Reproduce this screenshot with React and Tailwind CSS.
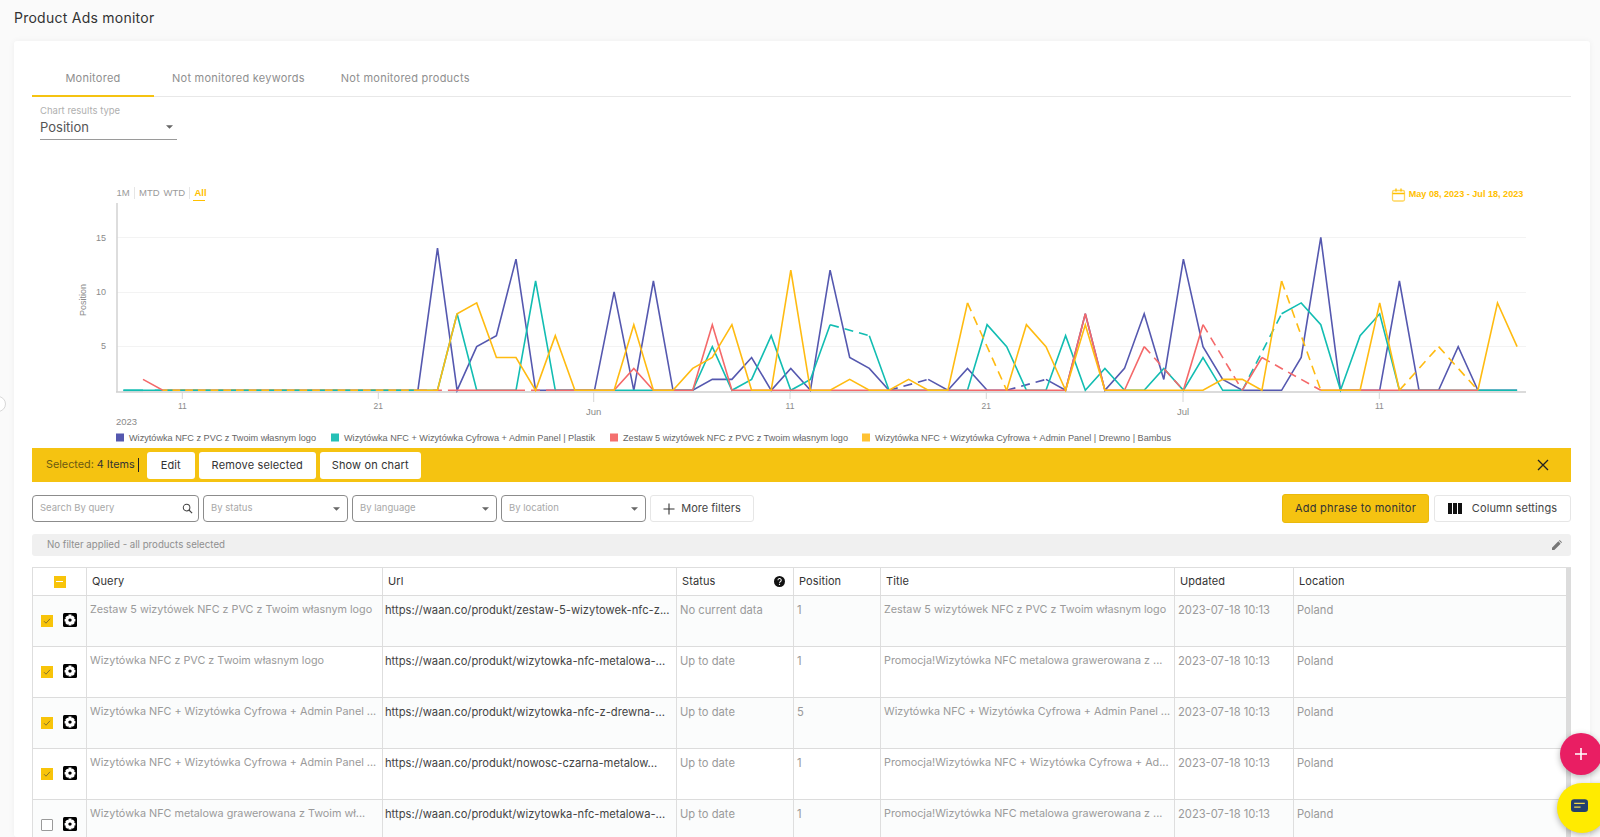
const FONT = "font-['Inter','Liberation_Sans',sans-serif]";

const X = (i) => 123.4 + 19.63 * i;
const Y = (v) => 390.3 - (v - 1) * 10.93;
const _ = null;

const blue = [_,_,_,_,_,_,_,_,_,_,_,_,_,_,_,1,14,1,5,6,13,1,1,1,1,10,1,11,1,1,2,2,4,1,3,1,12,4,3,1,_,2,1,3,1,1,_,2,1,8,1,3,8,2,13,5,2,1,1,1,4,15,1,1,1,11,1,1,5,1,1,1];
const teal = [1,1,1,1,1,1,1,1,1,1,1,1,1,1,1,1,1,8,1,1,1,11,1,1,1,1,1,1,1,1,5,1,2,6,1,2,7,_,6,1,1,1,1,1,7,5,1,1,6,1,3,1,1,3,1,4,1,1,_,8,9,7,1,6,8,1,1,1,1,1,1,1];
const red = [_,2,1,1,1,1,1,1,1,1,1,1,1,1,1,1,_,1,1,1,1,_,1,1,1,1,3,1,1,1,7,1,1,1,1,1,1,1,1,1,1,1,1,1,1,1,1,1,1,8,1,1,5,_,1,7,_,1,4,_,_,1,1,1,1,1,1,1,1,1,_,_];
const yellow = [_,_,1,1,1,1,1,1,1,1,1,1,1,1,1,1,1,8,9,4,4,1,6,1,1,1,7,1,1,3,4,7,1,1,12,1,1,2,1,1,2,1,1,9,_,1,7,5,1,7,1,1,1,1,1,1,2,2,1,11,_,1,1,1,9,1,_,5,_,1,9,5];

function buildPaths(vals) {
  let solid = "";
  let dashed = "";
  let last = null;
  vals.forEach((v, i) => {
    if (v === null) return;
    const pt = `${X(i).toFixed(1)} ${Y(v).toFixed(1)}`;
    if (last === null) solid += `M${pt}`;
    else if (last === i - 1) solid += `L${pt}`;
    else {
      dashed += `M${X(last).toFixed(1)} ${Y(vals[last]).toFixed(1)}L${pt}`;
      solid += `M${pt}`;
    }
    last = i;
  });
  return { solid, dashed };
}

function Series({ vals, color }) {
  const { solid, dashed } = buildPaths(vals);
  return (
    <g fill="none" stroke={color} strokeWidth="1.6" strokeLinejoin="miter">
      <path d={solid} />
      <path d={dashed} strokeDasharray="9 6" />
    </g>
  );
}

function Chart() {
  const tx = "#8a8a8a";
  const ticks = [[182.3, "11", 0], [378.3, "21", 0], [593.7, "Jun", 1], [790, "11", 0], [986.3, "21", 0], [1183, "Jul", 1], [1379.3, "11", 0]];
  const legend = [
    [116, "#5558af", "Wizytówka NFC z PVC z Twoim własnym logo", 187],
    [331, "#26c0b6", "Wizytówka NFC + Wizytówka Cyfrowa + Admin Panel | Plastik", 251],
    [610, "#f4706f", "Zestaw 5 wizytówek NFC z PVC z Twoim własnym logo", 225],
    [862, "#ffc233", "Wizytówka NFC + Wizytówka Cyfrowa + Admin Panel | Drewno | Bambus", 296],
  ];
  return (
    <svg viewBox="32 183 1539 262" className="block w-[1539px] h-[262px]" fontFamily="'Liberation Sans', Arial, sans-serif">
      <g fontSize="9.5" fill="#9a9a9a">
        <text x="116.5" y="196">1M</text>
        <line x1="134.5" y1="187" x2="134.5" y2="199" stroke="#e6e6e6" />
        <text x="139" y="196">MTD</text>
        <text x="163.5" y="196">WTD</text>
        <line x1="189.5" y1="187" x2="189.5" y2="199" stroke="#e6e6e6" />
        <text x="194.5" y="196" fill="#ffc000" fontWeight="700">All</text>
        <line x1="193" y1="200.5" x2="205" y2="200.5" stroke="#ffc000" />
      </g>
      <g fill="none" stroke="#ffd65c" strokeWidth="1.3">
        <rect x="1392.5" y="190.5" width="12" height="10.5" rx="1.5" />
        <path d="M1392.5 193.5h12M1396 188.5v3M1401 188.5v3" stroke="#ffc000" />
      </g>
      <text x="1408.7" y="197" fontSize="9.5" fontWeight="700" fill="#ffc000" textLength="114.6" lengthAdjust="spacingAndGlyphs">May 08, 2023 - Jul 18, 2023</text>

      <g stroke="#f3f3f3">
        <line x1="117" y1="237.5" x2="1526" y2="237.5" />
        <line x1="117" y1="292.5" x2="1526" y2="292.5" />
        <line x1="117" y1="346.5" x2="1526" y2="346.5" />
      </g>
      <line x1="117" y1="203" x2="117" y2="392" stroke="#cfcfcf" strokeWidth="1.4" />
      <line x1="116" y1="392" x2="1526" y2="392" stroke="#cfcfcf" strokeWidth="1.4" />
      <g fontSize="9" fill={tx} textAnchor="end">
        <text x="106" y="241">15</text>
        <text x="106" y="295">10</text>
        <text x="106" y="349">5</text>
      </g>
      <text transform="translate(86 300) rotate(-90)" fontSize="9" fill={tx} textAnchor="middle">Position</text>

      {ticks.map(([x, label, major], i) => (
        <g key={i}>
          <line x1={x} y1="392" x2={x} y2={major ? 402 : 399} stroke="#d6d6d6" />
          <text x={x} y={major ? 415 : 409} fontSize={major ? 9.5 : 8.5} fill={tx} textAnchor="middle">{label}</text>
        </g>
      ))}
      <text x="116" y="425" fontSize="9.5" fill={tx}>2023</text>

      <Series vals={blue} color="#5558af" />
      <Series vals={teal} color="#12bdb2" />
      <Series vals={red} color="#f4696a" />
      <Series vals={yellow} color="#ffbb11" />
      <path d={`M${X(1.6)} ${Y(1)}H${X(15)}`} fill="none" stroke="#12bdb2" strokeWidth="1.6" strokeDasharray="5 7.7" />
      <path d={`M${X(0)} ${Y(1)}H${X(1)}`} fill="none" stroke="#12bdb2" strokeWidth="1.6" />

      {legend.map(([x, c, t, w]) => (
        <g key={t}>
          <rect x={x} y="433.5" width="8" height="8" fill={c} />
          <text x={x + 13} y="441" fontSize="9.6" fill="#666" textLength={w} lengthAdjust="spacingAndGlyphs">{t}</text>
        </g>
      ))}
    </svg>
  );
}

function Caret({ className = "" }) {
  return (
    <svg viewBox="0 0 10 5" className={`w-[7px] h-[4px] ${className}`}>
      <path d="M0 0h10L5 5z" fill="#666" />
    </svg>
  );
}

function Select({ label, w }) {
  return (
    <div className={`${w} h-[27px] flex items-center justify-between pl-[7px] pr-[7px] border border-[#8c8c8c] rounded-[4px] text-[9.5px] text-[#a8a8a8]`}>
      <span>{label}</span>
      <Caret />
    </div>
  );
}

function Btn({ children, w }) {
  return (
    <div className={`${w} h-[27px] flex items-center justify-center bg-white rounded-[3px] text-[11px] tracking-[0.15px] text-[#333]`}>{children}</div>
  );
}

function Gear() {
  return (
    <svg viewBox="0 0 14 14" className="w-[14px] h-[14px] shrink-0">
      <rect width="14" height="14" rx="1.5" fill="#000" />
      <path
        fillRule="evenodd"
        fill="#fff"
        d="M5.6 1.6h2.8l.3 1.6 1.1-.6 1.9 1.9-.7 1.1 1.4.3v2.6l-1.4.3.7 1.1-1.9 1.9-1.1-.7-.3 1.4H5.6l-.3-1.4-1.1.7-1.9-1.9.7-1.1-1.4-.3V6l1.4-.3-.7-1.1 1.9-1.9 1.1.6zM7 5.4a1.7 1.7 0 1 0 0 3.4 1.7 1.7 0 0 0 0-3.4z"
      />
    </svg>
  );
}

function CheckBox({ checked }) {
  return checked ? (
    <div className="w-[12px] h-[12px] bg-[#f8c40a] flex items-center justify-center shrink-0">
      <svg viewBox="0 0 12 12" className="w-[12px] h-[12px]">
        <path d="M3 6.2l2 2 4-4.4" fill="none" stroke="#7a6a30" strokeWidth="0.9" />
      </svg>
    </div>
  ) : (
    <div className="w-[12px] h-[12px] border border-[#9a9a9a] rounded-[1px] bg-white shrink-0" />
  );
}

const rows = [
  ["Zestaw 5 wizytówek NFC z PVC z Twoim własnym logo", "https://waan.co/produkt/zestaw-5-wizytowek-nfc-z...", "No current data", "1", "Zestaw 5 wizytówek NFC z PVC z Twoim własnym logo", true],
  ["Wizytówka NFC z PVC z Twoim własnym logo", "https://waan.co/produkt/wizytowka-nfc-metalowa-...", "Up to date", "1", "Promocja!Wizytówka NFC metalowa grawerowana z ...", true],
  ["Wizytówka NFC + Wizytówka Cyfrowa + Admin Panel ...", "https://waan.co/produkt/wizytowka-nfc-z-drewna-...", "Up to date", "5", "Wizytówka NFC + Wizytówka Cyfrowa + Admin Panel ...", true],
  ["Wizytówka NFC + Wizytówka Cyfrowa + Admin Panel ...", "https://waan.co/produkt/nowosc-czarna-metalow...", "Up to date", "1", "Promocja!Wizytówka NFC + Wizytówka Cyfrowa + Ad...", true],
  ["Wizytówka NFC metalowa grawerowana z Twoim wł...", "https://waan.co/produkt/wizytowka-nfc-metalowa-...", "Up to date", "1", "Promocja!Wizytówka NFC metalowa grawerowana z ...", false],
];

const cols = "grid grid-cols-[53px_296px_294px_117px_87px_294px_119px_273px]";

function Row({ r, tinted }) {
  const cell = "border-l border-[#dedede] pl-[3px] pt-[6px] whitespace-nowrap";
  return (
    <div className={`${cols} h-[51px] border-b border-[#dcdcdc] text-[11.2px] text-[#9a9a9a] ${tinted ? "bg-[#fbfcfc]" : "bg-white"}`}>
      <div className="flex items-start pl-[8px] pt-[17px] gap-[10px]">
        <div className="pt-[2px]"><CheckBox checked={r[5]} /></div>
        <Gear />
      </div>
      <div className={`${cell} text-[10.8px]`}>{r[0]}</div>
      <div className={`${cell} !pl-[2px] text-[#444]`}>{r[1]}</div>
      <div className={cell}>{r[2]}</div>
      <div className={cell}>{r[3]}</div>
      <div className={`${cell} text-[10.8px]`}>{r[4]}</div>
      <div className={cell}>2023-07-18 10:13</div>
      <div className={cell}>Poland</div>
    </div>
  );
}

export default function App() {
  const th = "border-l border-[#dedede] pl-[5px] flex items-center";
  return (
    <div className={`${FONT} relative h-[837px] overflow-hidden bg-[#fafafa] pl-[14px] pr-[10px]`}>
      <div className="h-[41px] pt-[9px] text-[14px] leading-[17px] tracking-[0.25px] text-[#333]">Product Ads monitor</div>
      <div className="bg-white rounded-[3px] shadow-[0_0_6px_rgba(0,0,0,0.05)] h-[796px] pl-[18px] pr-[19px] pt-[17px]">
        <div className="flex h-[39px] border-b border-[#e8e8e8] text-[11px] tracking-[0.25px] text-[#8f8f8f]">
          <div className="w-[122px] h-[39px] pt-[3px] flex items-center justify-center border-b-2 border-[#f5c311]">Monitored</div>
          <div className="pl-[18px] pr-[18px] pt-[2px] flex items-center">Not monitored keywords</div>
          <div className="pl-[18px] pr-[18px] pt-[2px] flex items-center">Not monitored products</div>
        </div>
        <div className="ml-[8px] w-[137px] h-[43px] border-b border-[#9a9a9a] pt-[8px]">
          <div className="text-[9.5px] leading-[12px] text-[#b0b0b0]">Chart results type</div>
          <div className="flex items-center justify-between pr-[4px] text-[13px] leading-[20px] text-[#555]">
            <span>Position</span>
            <Caret />
          </div>
        </div>
        <div className="h-[43px]" />
        <Chart />
        <div className="h-[34px] mt-[3px] bg-[#f5c311] flex items-center pl-[14px] pr-[20px]">
          <div className="text-[10.8px] text-[#6b5a12]">Selected: <span className="text-[#333]">4 Items</span></div>
          <div className="w-px h-[14px] bg-[#222] ml-[3px] mr-[8px]" />
          <div className="flex gap-[4px]">
            <Btn w="w-[48px]">Edit</Btn>
            <Btn w="w-[117px]">Remove selected</Btn>
            <Btn w="w-[101px]">Show on chart</Btn>
          </div>
          <svg viewBox="0 0 12 12" className="w-[12px] h-[12px] ml-auto mr-[2px]">
            <path d="M1 1l10 10M11 1L1 11" stroke="#222" strokeWidth="1.3" />
          </svg>
        </div>
        <div className="flex items-center mt-[13px] h-[27px]">
          <div className="w-[167px] h-[27px] flex items-center justify-between pl-[7px] pr-[5px] border border-[#8c8c8c] rounded-[4px] text-[9.5px] text-[#a8a8a8]">
            <span>Search By query</span>
            <svg viewBox="0 0 12 12" className="w-[11px] h-[11px]">
              <circle cx="5" cy="5" r="3.6" fill="none" stroke="#444" strokeWidth="1.1" />
              <path d="M7.6 7.6L11 11" stroke="#444" strokeWidth="1.3" />
            </svg>
          </div>
          <div className="flex gap-[4px] ml-[4px]">
            <Select label="By status" w="w-[145px]" />
            <Select label="By language" w="w-[145px]" />
            <Select label="By location" w="w-[145px]" />
          </div>
          <div className="ml-[4px] w-[104px] h-[27px] flex items-center justify-center gap-[6px] border border-[#e6e6e6] rounded-[3px] text-[11px] text-[#444]">
            <svg viewBox="0 0 12 12" className="w-[12px] h-[12px]"><path d="M6 .5v11M.5 6h11" stroke="#333" strokeWidth="1.1" /></svg>
            More filters
          </div>
          <div className="ml-auto w-[147px] h-[29px] flex items-center justify-center bg-[#f5c311] border border-[#eab90c] rounded-[3px] text-[11px] tracking-[0.25px] text-[#333]">Add phrase to monitor</div>
          <div className="ml-[5px] w-[137px] h-[27px] flex items-center justify-center gap-[10px] border border-[#e6e6e6] rounded-[3px] text-[11px] tracking-[0.1px] text-[#444]">
            <svg viewBox="0 0 14 11" className="w-[14px] h-[11px]"><path d="M0 0h4v11H0zM5 0h4v11H5zM10 0h4v11h-4z" fill="#111" /></svg>
            Column settings
          </div>
        </div>
        <div className="mt-[12px] h-[22px] bg-[#f0f0f0] rounded-[3px] flex items-center justify-between pl-[15px] pr-[9px] text-[9.7px] text-[#8f8f8f]">
          <span>No filter applied - all products selected</span>
          <svg viewBox="0 0 12 12" className="w-[10px] h-[10px]"><path d="M0 12V9.2L7.6 1.6l2.8 2.8L2.8 12zM8.4.8L9.2 0 12 2.8l-.8.8z" fill="#777" /></svg>
        </div>
        <div className="mt-[11px] relative border-t border-l border-[#dedede]">
          <div className={`${cols} h-[28px] border-b border-[#dcdcdc] text-[11px] tracking-[0.1px] text-[#333] bg-white`}>
            <div className="flex items-center justify-center">
              <div className="w-[12px] h-[12px] bg-[#f8c40a] flex items-center justify-center"><div className="w-[7px] h-[1.5px] bg-white" /></div>
            </div>
            <div className={th}>Query</div>
            <div className={th}>Url</div>
            <div className={`${th} justify-between pr-[8px]`}>
              Status
              <svg viewBox="0 0 12 12" className="w-[11px] h-[11px]">
                <circle cx="6" cy="6" r="6" fill="#111" />
                <path d="M4.3 4.6a1.8 1.8 0 1 1 2.6 1.6c-.6.3-.9.6-.9 1.2" fill="none" stroke="#fff" strokeWidth="1.1" />
                <rect x="5.4" y="8.5" width="1.2" height="1.2" fill="#fff" />
              </svg>
            </div>
            <div className={th}>Position</div>
            <div className={th}>Title</div>
            <div className={th}>Updated</div>
            <div className={th}>Location</div>
          </div>
          {rows.map((r, i) => <Row key={i} r={r} tinted={i % 2 === 0} />)}
          <div className="absolute top-0 right-0 bottom-0 w-[5px] bg-[#dcdcdc]" />
        </div>
      </div>

      <div className="absolute left-[-10px] top-[396px] w-[16px] h-[16px] rounded-full border border-[#d8d8d8] bg-white" />

      <div className="absolute left-[1560px] top-[733px] w-[42px] h-[42px] rounded-full bg-[#e91e63] shadow-[0_2px_6px_rgba(0,0,0,0.3)] flex items-center justify-center">
        <svg viewBox="0 0 12 12" className="w-[12px] h-[12px]"><path d="M6 0v12M0 6h12" stroke="#fff" strokeWidth="1.6" /></svg>
      </div>
      <div className="absolute left-[1557px] top-[783px] w-[50px] h-[50px] rounded-full rounded-tr-none bg-[#ffeb00] shadow-[0_2px_6px_rgba(0,0,0,0.3)]">
        <svg viewBox="0 0 16 12" className="absolute left-[14px] top-[16px] w-[17px] h-[13px]">
          <rect width="16" height="12" rx="3" fill="#24406e" />
          <path d="M3 4h10M3 7.5h6" stroke="#f0d84a" strokeWidth="1.1" />
        </svg>
      </div>
    </div>
  );
}
